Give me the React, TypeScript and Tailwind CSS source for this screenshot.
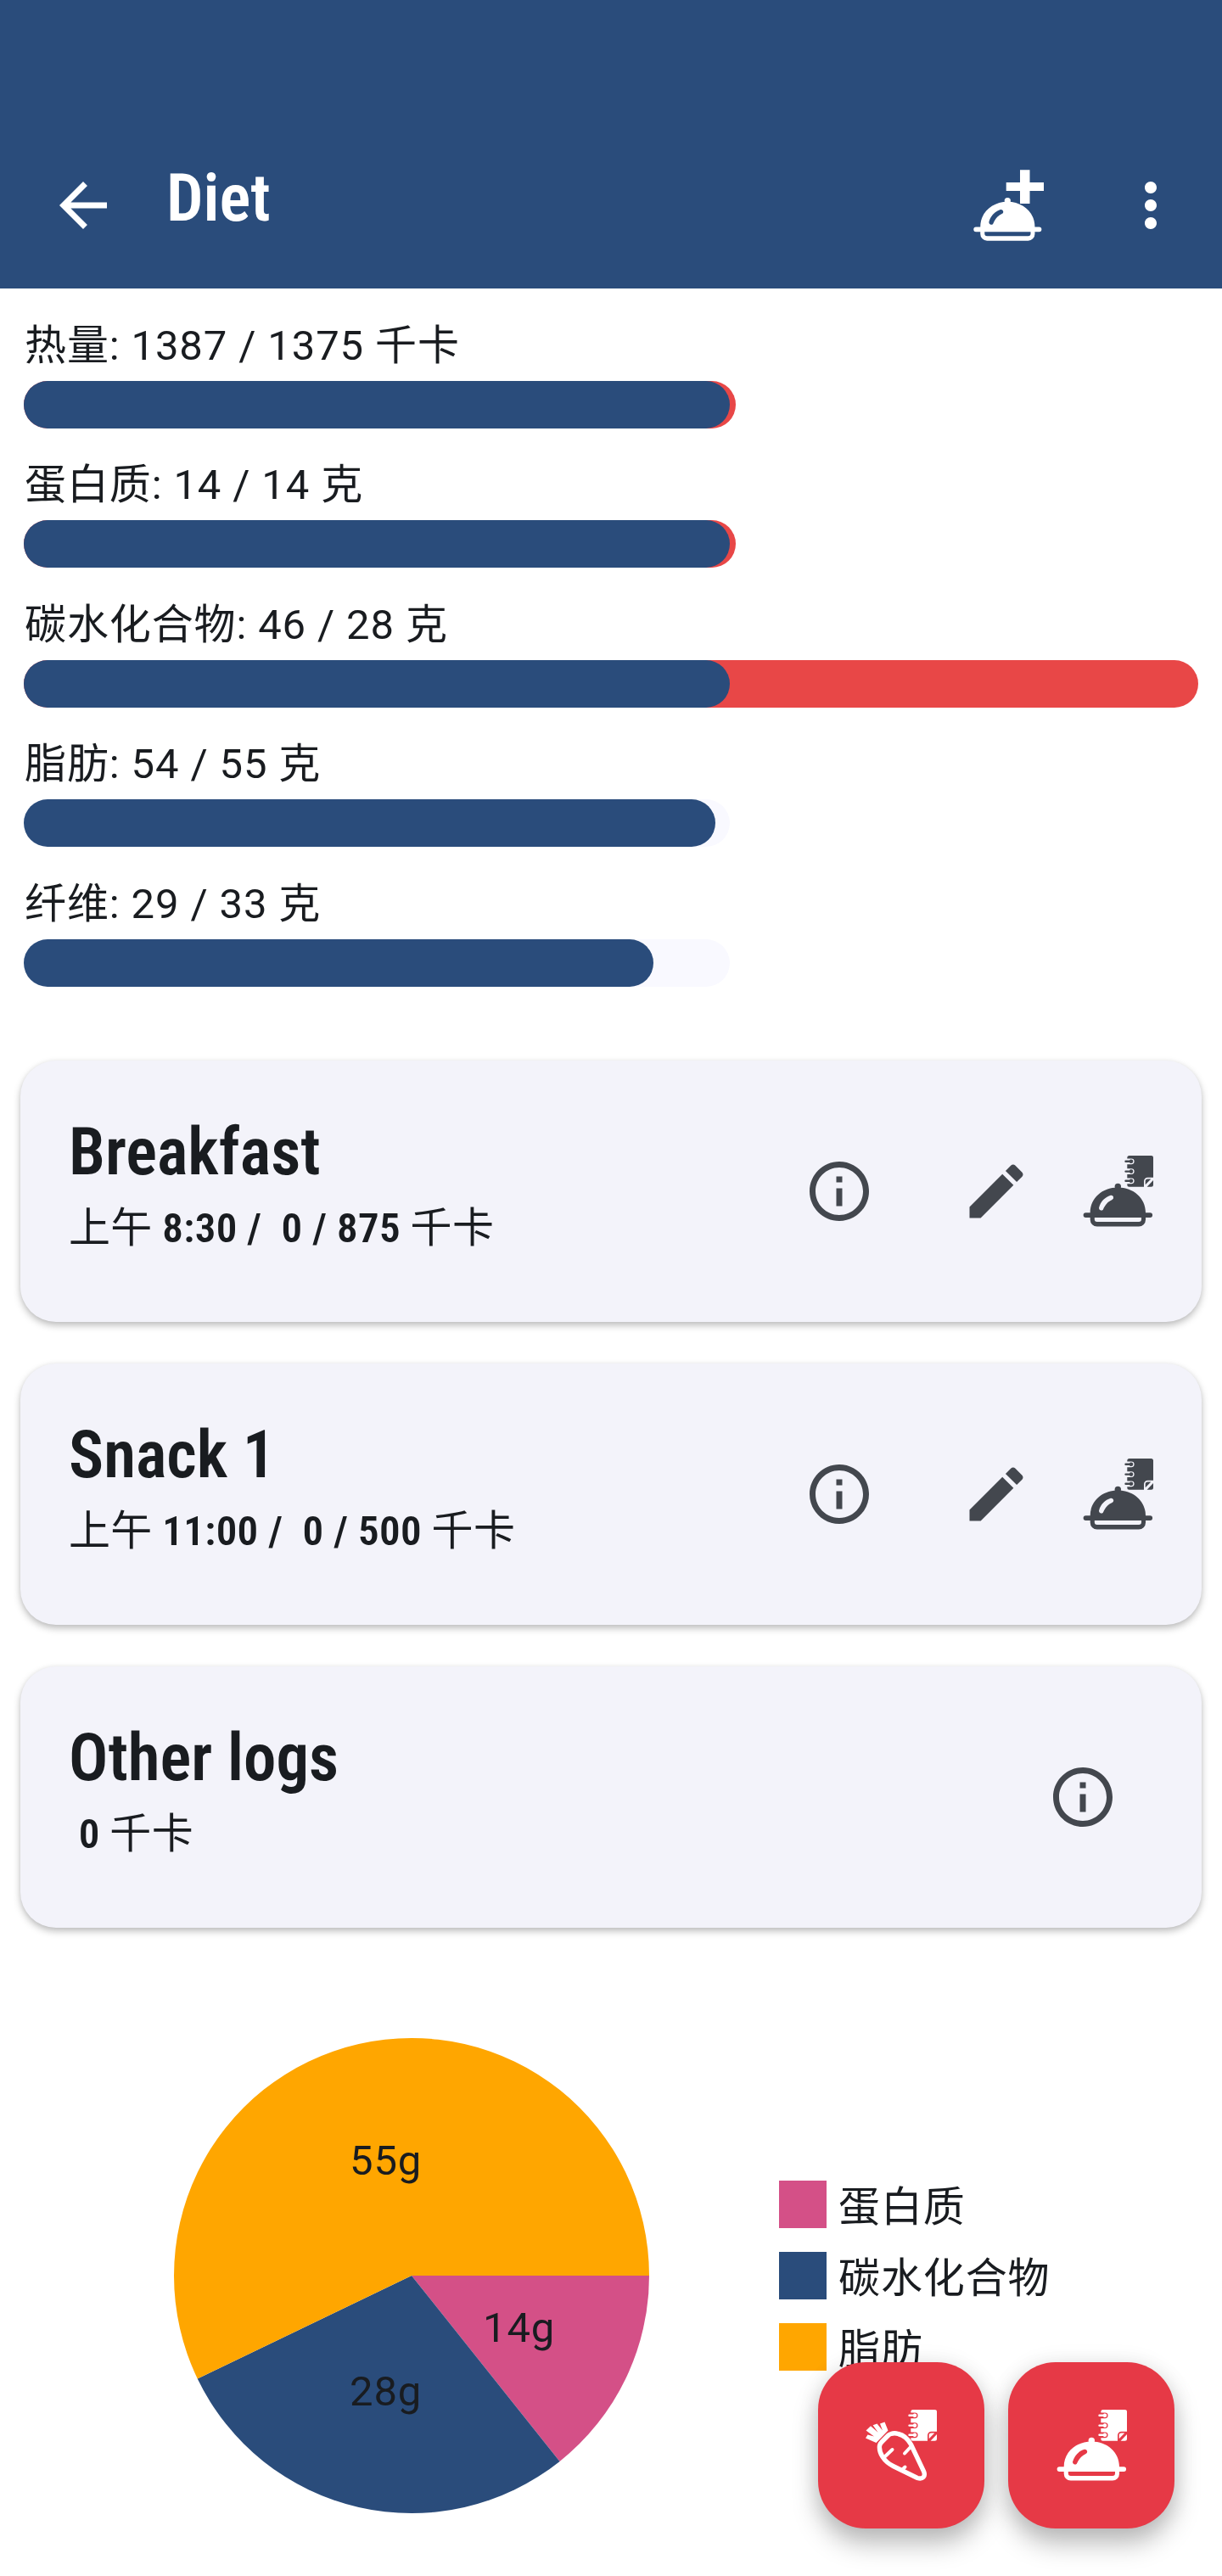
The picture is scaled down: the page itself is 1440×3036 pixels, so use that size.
import type { ReactNode } from "react";

const cjk = "font-['Roboto','Noto_Sans_CJK_SC',sans-serif]";

const SLICES = [
  { label: "蛋白质", grams: 13.75, text: "14g", color: "#d45087", x: 364, y: 358 },
  { label: "碳水化合物", grams: 27.5, text: "28g", color: "#2a4c7b", x: 207, y: 433 },
  { label: "脂肪", grams: 55, text: "55g", color: "#ffa600", x: 207, y: 161 },
];

const BARS = [
  { text: "热量: 1387 / 1375 千卡", fill: 832, over: 839, row: "h-[164px]" },
  { text: "蛋白质: 14 / 14 克", fill: 832, over: 839, row: "h-[165px]" },
  { text: "碳水化合物: 46 / 28 克", fill: 832, over: 1384, row: "h-[164px]" },
  { text: "脂肪: 54 / 55 克", fill: 815, over: 0, row: "h-[165px]" },
  { text: "纤维: 29 / 33 克", fill: 742, over: 0, row: "h-[164px]" },
];

function Icon({ children }: { children: ReactNode }) {
  return (
    <svg width="84" height="84" viewBox="0 0 24 24" fill="currentColor" className="block shrink-0">
      {children}
    </svg>
  );
}

function InfoIcon() {
  return (
    <Icon>
      <path d="M11 7h2v2h-2zm0 4h2v6h-2zm1-9C6.48 2 2 6.48 2 12s4.480 10 10 10 10-4.480 10-10S17.520 2 12 2zm0 18c-4.410 0-8-3.590-8-8s3.590-8 8-8 8 3.590 8 8-3.590 8-8 8z" />
    </Icon>
  );
}

function EditIcon() {
  return (
    <Icon>
      <path d="M3 17.250V21h3.750L17.810 9.940l-3.750-3.750L3 17.250zM20.710 7.040c.39-.39.39-1.020 0-1.410l-2.340-2.340c-.39-.39-1.020-.39-1.410 0l-1.830 1.830 3.750 3.750 1.830-1.830z" />
    </Icon>
  );
}

function DishShape() {
  return (
    <>
      <circle cx="42.300" cy="36.500" r="3.700" />
      <path
        fillRule="evenodd"
        d="M4.500 67.200H9.700C9.700 50 24 37.500 42.300 37.500S75 50 75 67.200H80.200a2.900 2.900 0 0 1 0 5.800H75V75.500a8 8 0 0 1-8 8H17.700a8 8 0 0 1-8-8V73H4.500a2.900 2.900 0 0 1 0-5.800ZM14.800 73V75a3 3 0 0 0 3 3H67a3 3 0 0 0 3-3V73ZM20 61.500a2.800 2.800 0 0 0 4.800 2.200C27.500 57.500 30.500 54.200 35.500 51.900a2.700 2.700 0 0 0-1.700-5.100C27 49 22 54 20 61.500Z"
      />
    </>
  );
}

function BookShape() {
  return (
    <>
      <path d="M55.800 0H81.500A2.500 2.500 0 0 1 84 2.500V25.700H77.500A4.500 4.500 0 0 0 73 30.200V36.800H55.800A2.500 2.500 0 0 1 53.300 34.300L53.300 33.200H58.200A3.400 3.400 0 0 0 58.200 26.400H53.300V22H58.200A3.400 3.400 0 0 0 58.200 15.200H53.300V10.200H58.200A3.400 3.400 0 0 0 58.200 3.400H53.300V2.500A2.500 2.500 0 0 1 55.800 0Z" />
      <path d="M51.500 5.600H56C56.400 4.900 57 4.500 58 4.500a2.300 2.300 0 0 1 0 4.600C57 9.100 56.400 8.700 56 8H51.500a1.200 1.200 0 0 1 0-2.400ZM51.500 17.400H56C56.400 16.700 57 16.300 58 16.300a2.300 2.300 0 0 1 0 4.600C57 20.900 56.400 20.500 56 19.800H51.500a1.200 1.200 0 0 1 0-2.400ZM51.500 28.600H56C56.400 27.900 57 27.500 58 27.500a2.300 2.300 0 0 1 0 4.600C57 32.100 56.400 31.700 56 31H51.500a1.200 1.200 0 0 1 0-2.400Z" />
      <path d="M74.700 34.200V30.300Q74.700 27.500 77.500 27.500H81.300ZM84 29V34.300A2.500 2.500 0 0 1 81.500 36.800H76.600Z" />
    </>
  );
}

function DishBookIcon() {
  return (
    <svg width="84" height="84" viewBox="0 0 84 84" fill="currentColor" className="block shrink-0">
      <DishShape />
      <BookShape />
    </svg>
  );
}

function DishAddIcon() {
  return (
    <svg width="84" height="84" viewBox="0 0 84 84" fill="currentColor" className="block shrink-0">
      <g transform="translate(-0.3 0.2) scale(0.983 1)">
        <DishShape />
      </g>
      <path d="M56 0.300H67.500V15H84V25H67.500V40H56V25H39.700V15H56Z" />
    </svg>
  );
}

function CarrotBookIcon() {
  return (
    <svg width="84" height="84" viewBox="0 0 84 84" fill="currentColor" className="block shrink-0">
      <BookShape />
      <path d="M0.500 24.500L6 19.200L14.600 26.700L8.600 18.200L13.500 16.400L20 24.500L17 16.500L22.500 14.500L26.500 24.500L12.500 39L0 33.500L2.500 29.500L10 31.500Z" />
      <path
        d="M30 28.500Q34 27 38.500 28.500C45 30 50 34.500 53.500 41L68.500 72.500C71 78.500 67.500 82.500 61 80.500L32.500 66.500C21.500 61 15.500 51 16.500 42.500Q17 40 19.500 37.500L26.500 30.500Q28 29 30 28.500Z"
        fill="none"
        stroke="currentColor"
        strokeWidth="5.400"
      />
      <path d="M21.500 56.500L31.500 47M52.500 44.500L46 51.500M42.500 71.500L46.500 67.500" fill="none" stroke="currentColor" strokeWidth="4" strokeLinecap="round" />
    </svg>
  );
}

function Meal({ title, sub, children }: { title: string; sub: ReactNode; children: ReactNode }) {
  return (
    <section className="flex h-[308px] items-center rounded-[42px] bg-[#f3f3fa] shadow-[0_4px_8px_rgba(0,0,0,0.26),0_0_5px_rgba(0,0,0,0.04)]">
      <div className="min-w-0 flex-1 self-start pl-[57px] pt-[60px]">
        <h2 className="text-[77px] leading-[96px] font-semibold whitespace-nowrap font-['Roboto_Condensed','Roboto',sans-serif] [font-stretch:75%]">{title}</h2>
        <p className="pt-[7px] text-[49px] leading-[70px] tracking-[0.35px] font-semibold whitespace-pre font-['Roboto_Condensed','Roboto','Noto_Sans_CJK_SC',sans-serif] [font-stretch:75%]">{sub}</p>
      </div>
      <div className="flex items-center text-[#43474e]">{children}</div>
    </section>
  );
}

function MealActions() {
  return (
    <>
      <InfoIcon />
      <div className="ml-[101px] mr-[59px]">
        <EditIcon />
      </div>
      <div className="mr-[57px]">
        <DishBookIcon />
      </div>
    </>
  );
}

function Cn({ children }: { children: string }) {
  return <span className={"font-normal " + cjk}>{children}</span>;
}

function arc(from: number, to: number) {
  const p = (a: number) => `${280 + 280 * Math.cos(a)} ${280 + 280 * Math.sin(a)}`;
  const large = to - from > Math.PI ? 1 : 0;
  return `M280 280L${p(from)}A280 280 0 ${large} 1 ${p(to)}Z`;
}

function Pie() {
  const total = SLICES.reduce((s, x) => s + x.grams, 0);
  let sum = 0;
  return (
    <svg width="560" height="560" viewBox="0 0 560 560" className="block shrink-0">
      {SLICES.map((s) => {
        const from = (sum / total) * 2 * Math.PI;
        sum += s.grams;
        return <path key={s.label} d={arc(from, (sum / total) * 2 * Math.PI)} fill={s.color} />;
      })}
      {SLICES.map((s) => (
        <text key={s.label} x={s.x} y={s.y} fill="#191c20" className="text-[49px] tracking-[0.875px] font-['Roboto',sans-serif]">
          {s.text}
        </text>
      ))}
    </svg>
  );
}

export default function App() {
  return (
    <main className={"relative h-[3036px] w-[1440px] overflow-hidden bg-white text-[#191c20] " + cjk}>
      <header className="flex h-[340px] items-start bg-[#2a4c7b] pt-[200px] text-white">
        <div className="flex w-full items-start pl-14">
          <Icon>
            <path d="M20 11H7.830l5.590-5.590L12 4l-8 8 8 8 1.410-1.410L7.830 13H20v-2z" />
          </Icon>
          <h1 className="-mt-[14px] ml-[56px] flex-1 text-[77px] leading-[96px] font-semibold font-['Roboto_Condensed','Roboto',sans-serif] [font-stretch:75%]">Diet</h1>
          <DishAddIcon />
          <div className="ml-[84px] mr-[42px]">
            <Icon>
              <path d="M12 8c1.100 0 2-.9 2-2s-.9-2-2-2-2 .9-2 2 .9 2 2 2zm0 2c-1.100 0-2 .9-2 2s.9 2 2 2 2-.9 2-2-.9-2-2-2zm0 6c-1.100 0-2 .9-2 2s.9 2 2 2 2-.9 2-2-.9-2-2-2z" />
            </Icon>
          </div>
        </div>
      </header>

      <section className="px-7 pt-[33px]">
        {BARS.map((b) => (
          <div key={b.text} className={b.row}>
            <p className="h-[76px] pl-px text-[49px] leading-[70px] tracking-[0.875px] whitespace-nowrap">{b.text}</p>
            <div className="relative h-14">
              <div className="absolute inset-y-0 left-0 w-[832px] rounded-full bg-[#f9f9ff]" />
              {b.over > 0 && <div className="absolute inset-y-0 left-0 rounded-full bg-[#e84747]" style={{ width: b.over }} />}
              <div className="absolute inset-y-0 left-0 rounded-full bg-[#2a4c7b]" style={{ width: b.fill }} />
            </div>
          </div>
        ))}
      </section>

      <div className="mt-[55px] flex flex-col gap-[49px] px-6">
        <Meal title="Breakfast" sub={<><Cn>上午</Cn>{" 8:30 /  0 / 875 "}<Cn>千卡</Cn></>}>
          <MealActions />
        </Meal>
        <Meal title="Snack 1" sub={<><Cn>上午</Cn>{" 11:00 /  0 / 500 "}<Cn>千卡</Cn></>}>
          <MealActions />
        </Meal>
        <Meal title="Other logs" sub={<>{" 0 "}<Cn>千卡</Cn></>}>
          <div className="mr-[98px]">
            <InfoIcon />
          </div>
        </Meal>
      </div>

      <section className="mt-[130px] flex items-center pl-[205px]">
        <Pie />
        <div className="ml-[153px] flex flex-col gap-7">
          {SLICES.map((s) => (
            <div key={s.label} className="flex h-14 items-center">
              <span className="size-14" style={{ backgroundColor: s.color }} />
              <span className="ml-[14px] pt-[8px] text-[49px] leading-[70px] tracking-[0.875px]">{s.label}</span>
            </div>
          ))}
        </div>
      </section>

      <div className="absolute right-14 bottom-14 flex gap-7 text-white">
        {[<CarrotBookIcon key="food" />, <DishBookIcon key="meal" />].map((icon, i) => (
          <button key={i} className="flex size-[196px] items-center justify-center rounded-[56px] bg-[#e63946] shadow-[0_18px_30px_rgba(0,0,0,0.26),0_0_26px_rgba(0,0,0,0.08)]">
            {icon}
          </button>
        ))}
      </div>
    </main>
  );
}
